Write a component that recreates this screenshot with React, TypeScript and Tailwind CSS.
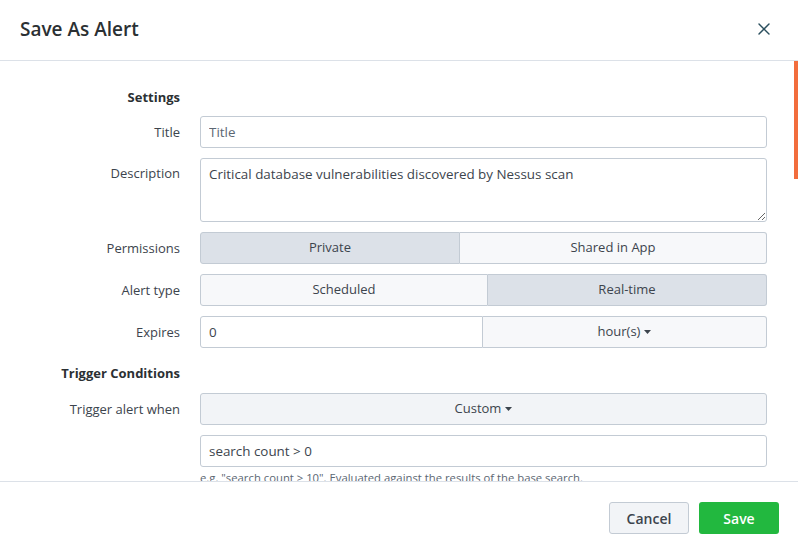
import { X } from "lucide-react";

const font = { fontFamily: "'Open Sans', Lato, sans-serif" };

function Caret() {
  return (
    <svg width="7" height="4" viewBox="0 0 7 4" className="ml-[4px] inline-block">
      <path d="M0 0 L7 0 L3.5 4 Z" fill="#3c444d" />
    </svg>
  );
}

function Row({ label, children, top }: { label: string; children: React.ReactNode; top?: boolean }) {
  return (
    <div className="flex">
      <div
        className={`w-[180px] shrink-0 text-right text-[13px] text-[#3c444d] ${top ? "pt-[6px] leading-[18px]" : "leading-[32px]"}`}
      >
        {label}
      </div>
      <div className="ml-[20px] w-[567px]">{children}</div>
    </div>
  );
}

function Toggle({ options, active, split }: { options: string[]; active: number; split: string }) {
  return (
    <div className="flex h-[32px] text-[13px] text-[#3c444d]">
      {options.map((o, i) => (
        <button
          key={o}
          style={{ width: i === 0 ? split : undefined }}
          className={`${i === 0 ? "rounded-l-[3px]" : "flex-1 rounded-r-[3px] border-l-0"} border border-[#c3cbd4] ${
            i === active ? "bg-[#dce1e8]" : "bg-[#f7f8fa]"
          }`}
        >
          {o}
        </button>
      ))}
    </div>
  );
}

export default function App() {
  return (
    <div className="flex h-[554px] w-[798px] flex-col bg-white" style={font}>
      {/* Header */}
      <div className="flex h-[61px] shrink-0 items-center justify-between border-b border-[#dce1e8] pb-[2px] pl-[20px] pr-[24px]">
        <h1 className="text-[19px] font-semibold text-[#2b3033]">Save As Alert</h1>
        <X size={20} strokeWidth={1.7} color="#2b4f5e" />
      </div>

      {/* Body */}
      <div className="flex min-h-0 flex-1">
        <div className="flex-1 overflow-hidden pt-[26px]">
          <div className="mb-[9px] flex">
            <div className="w-[180px] text-right text-[13px] font-bold leading-[20px] text-[#2b3033]">Settings</div>
          </div>
          <div className="flex flex-col gap-[10px]">
            <Row label="Title">
              <input
                placeholder="Title"
                className="h-[32px] w-full rounded-[3px] border border-[#c3cbd4] px-[8px] text-[13.4px] text-[#3c444d] outline-none placeholder:text-[#5c6773]"
              />
            </Row>
            <Row label="Description" top>
              <textarea
                defaultValue="Critical database vulnerabilities discovered by Nessus scan"
                className="block h-[64px] w-full rounded-[3px] border border-[#c3cbd4] px-[8px] py-[6px] text-[13.4px] leading-[18px] text-[#3c444d] outline-none"
              />
            </Row>
            <Row label="Permissions">
              <Toggle options={["Private", "Shared in App"]} active={0} split="260px" />
            </Row>
            <Row label="Alert type">
              <Toggle options={["Scheduled", "Real-time"]} active={1} split="288px" />
            </Row>
            <Row label="Expires">
              <div className="flex h-[32px] text-[13px] text-[#3c444d]">
                <input
                  defaultValue="0"
                  className="w-[283px] rounded-l-[3px] border border-[#c3cbd4] px-[8px] text-[13.4px] outline-none"
                />
                <button className="flex flex-1 items-center justify-center rounded-r-[3px] border border-l-0 border-[#c3cbd4] bg-[#f7f8fa]">
                  hour(s)
                  <Caret />
                </button>
              </div>
            </Row>
          </div>

          <div className="mb-[10px] mt-[15px] flex">
            <div className="w-[180px] text-right text-[13px] font-bold leading-[20px] text-[#2b3033]">
              Trigger Conditions
            </div>
          </div>
          <div className="flex flex-col gap-[10px]">
            <Row label="Trigger alert when">
              <button className="flex h-[32px] w-full items-center justify-center rounded-[3px] border border-[#c3cbd4] bg-[#f2f4f7] text-[13px] text-[#3c444d]">
                Custom
                <Caret />
              </button>
            </Row>
            <Row label="">
              <input
                defaultValue="search count > 0"
                className="h-[32px] w-full rounded-[3px] border border-[#c3cbd4] px-[8px] text-[13.4px] text-[#3c444d] outline-none"
              />
              <p className="mt-[4px] text-[11.3px] leading-[14px] text-[#5c6773]">
                e.g. "search count &gt; 10". Evaluated against the results of the base search.
              </p>
            </Row>
          </div>
        </div>
        <div className="w-[4px] shrink-0">
          <div className="h-[118px] bg-[#f26d3d]" />
        </div>
      </div>

      {/* Footer */}
      <div className="flex h-[73px] shrink-0 items-center justify-end gap-[10px] border-t border-[#dce1e8] pr-[19px]">
        <button className="h-[32px] w-[80px] rounded-[3px] border border-[#c3cbd4] bg-[#f2f4f7] text-[14px] font-semibold text-[#3c444d]">
          Cancel
        </button>
        <button className="h-[32px] w-[80px] rounded-[3px] bg-[#22b83f] text-[14px] font-semibold text-white">
          Save
        </button>
      </div>
    </div>
  );
}
